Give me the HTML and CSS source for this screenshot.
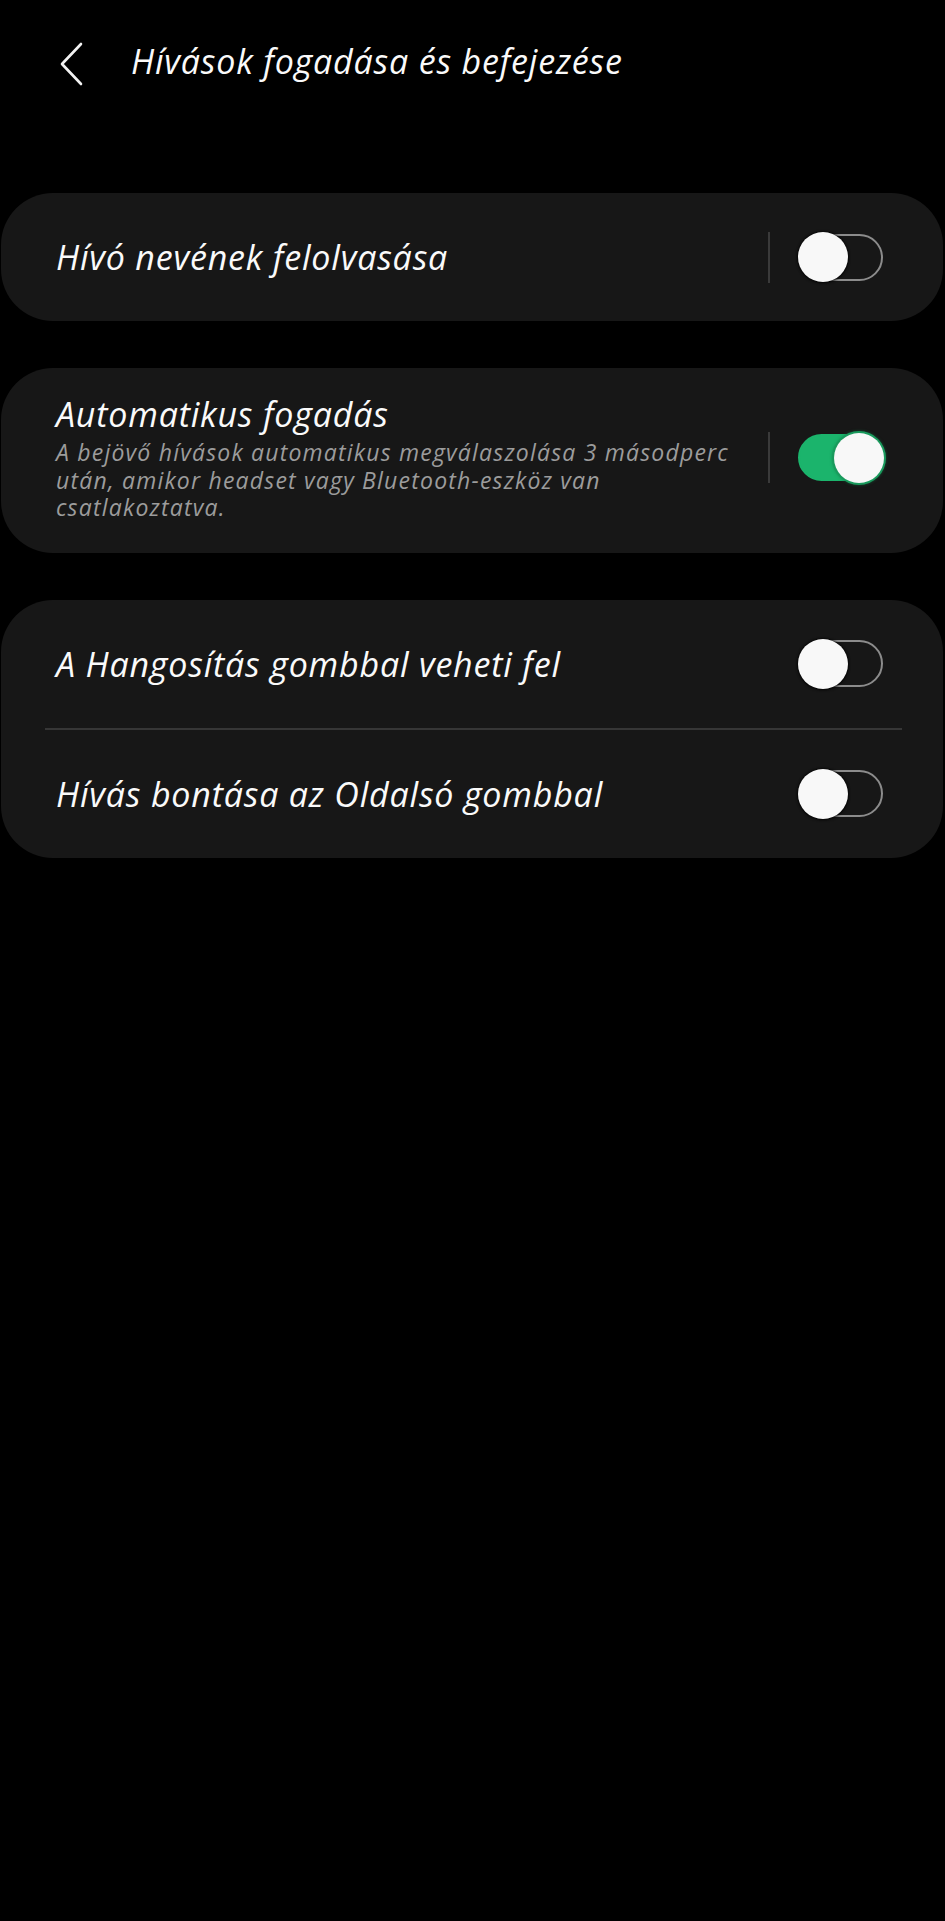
FILE: index.html
```html
<!DOCTYPE html>
<html lang="hu">

<head>
  <meta charset="UTF-8" />
  <meta name="viewport" content="width=device-width, initial-scale=1.0" />
  <title>Hívások fogadása és befejezése</title>
  <link rel="stylesheet" href="styles.css">
</head>

<body>
  <div class="screen">
    <header class="topbar">
      <button class="back" aria-label="Vissza">
        <svg width="26" height="46" viewBox="0 0 26 46">
          <path d="M23 3 L4 23 L23 43" fill="none" stroke="#f2f2f2" stroke-width="2.6" stroke-linecap="round" stroke-linejoin="round" />
        </svg>
      </button>
      <h1>Hívások fogadása és befejezése</h1>
    </header>

    <div class="list">
      <div class="card">
        <div class="row">
          <div class="text">
            <div class="label">Hívó nevének felolvasása</div>
          </div>
          <span class="sep"></span>
          <span class="switch"><span class="knob"></span></span>
        </div>
      </div>

      <div class="card">
        <div class="row tall">
          <div class="text">
            <div class="label">Automatikus fogadás</div>
            <div class="desc">A bejövő hívások automatikus megválaszolása 3 másodperc után, amikor headset vagy Bluetooth-eszköz van csatlakoztatva.</div>
          </div>
          <span class="sep"></span>
          <span class="switch on"><span class="knob"></span></span>
        </div>
      </div>

      <div class="card">
        <div class="row">
          <div class="text">
            <div class="label">A Hangosítás gombbal veheti fel</div>
          </div>
          <span class="switch"><span class="knob"></span></span>
        </div>
        <div class="divider"></div>
        <div class="row">
          <div class="text">
            <div class="label">Hívás bontása az Oldalsó gombbal</div>
          </div>
          <span class="switch"><span class="knob"></span></span>
        </div>
      </div>
    </div>
  </div>
</body>

</html>
```

FILE: styles.css
```css
* {
  box-sizing: border-box;
}

body {
  margin: 0;
  padding: 0;
  background-color: #000000;
  color: #fafafa;
  font-family: 'Open Sans', 'Noto Sans', sans-serif;
  font-style: italic;
  min-height: 1921px;
}

.screen {
  width: 945px;
}

.topbar {
  display: flex;
  align-items: center;
  height: 128px;
  padding-left: 58px;
}

.back {
  display: flex;
  align-items: center;
  justify-content: center;
  width: 26px;
  height: 46px;
  padding: 0;
  border: none;
  background: none;
  margin-right: 47px;
}

.topbar h1 {
  margin: 0 0 6px;
  font-size: 34px;
  font-weight: 400;
  letter-spacing: 0.8px;
  color: #fafafa;
}

.list {
  display: flex;
  flex-direction: column;
  gap: 47px;
  margin-top: 65px;
  padding: 0 2px 0 1px;
}

.card {
  background-color: #171717;
  border-radius: 52px;
}

.row {
  display: flex;
  align-items: center;
  min-height: 128px;
  padding: 0 60px 0 55px;
}

.row.tall {
  padding-top: 26px;
  padding-bottom: 31px;
}

.text {
  flex: 1;
  min-width: 0;
}

.label {
  font-size: 34px;
  line-height: 40px;
  letter-spacing: 0.8px;
}

.desc {
  margin-top: 5px;
  font-size: 23px;
  line-height: 27.5px;
  letter-spacing: 1.2px;
  color: #9c9c9c;
}

.sep {
  width: 2px;
  height: 51px;
  background-color: #3a3a3a;
  margin: 0 28px 0 18px;
}

.switch {
  position: relative;
  flex: none;
  width: 85px;
  height: 47px;
  border: 2.5px solid #8c8c8c;
  border-radius: 24px;
}

.knob {
  position: absolute;
  top: 50%;
  left: -2.5px;
  width: 50px;
  height: 50px;
  margin-top: -25px;
  border-radius: 50%;
  background-color: #f8f8f8;
  box-shadow: 0 0 2px 1px rgba(0, 0, 0, 0.6), 0 1px 3px rgba(0, 0, 0, 0.5);
}

.switch.on {
  background-color: #1bb46c;
  border-color: #1bb46c;
}

.switch.on .knob {
  left: auto;
  right: -2.5px;
  box-shadow: 0 0 0 2px #1a9a5d, 0 0 3px 2px rgba(20, 120, 70, 0.6);
}

.divider {
  height: 2px;
  margin: 0 41px 0 44px;
  background-color: #363636;
}
```
